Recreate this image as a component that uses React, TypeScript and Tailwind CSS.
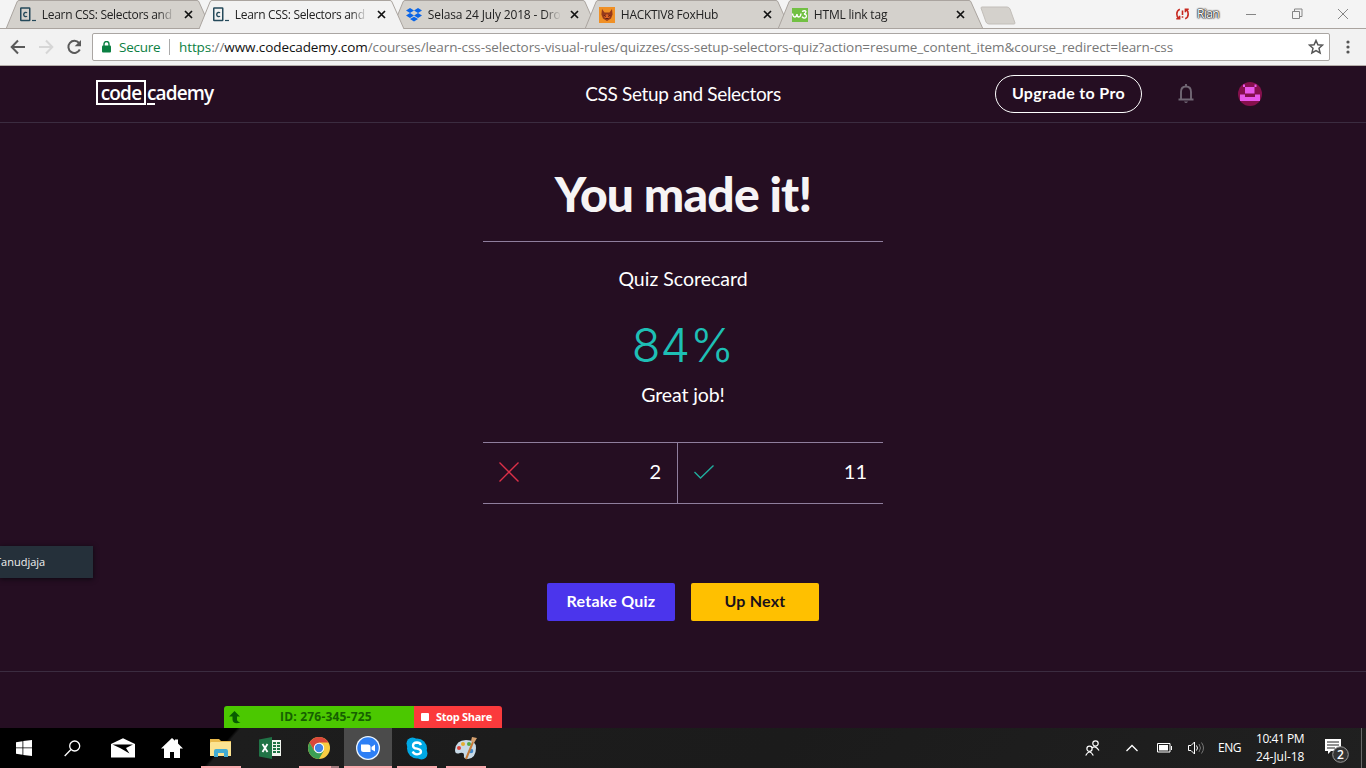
import React from "react";

const ui = "font-['Open_Sans','Noto_Sans',sans-serif]";
const body = "font-['Lato','Noto_Sans',sans-serif]";

function CodeFavicon() {
  return (
    <svg width="16" height="16" viewBox="0 0 16 16" fill="none">
      <rect x=".75" y="1" width="9" height="12.5" rx=".5" stroke="#24495a" strokeWidth="1.5" />
      <path d="M7 5.9C6.3 5.1 3.7 5 3.7 7.5S6.3 9.9 7 9.1" stroke="#24495a" strokeWidth="1.4" />
      <path d="M12 13.5h4" stroke="#24495a" strokeWidth="1.2" />
    </svg>
  );
}

function DropboxFavicon() {
  return (
    <svg width="16" height="16" viewBox="0 0 16 16" fill="#0a65e8">
      <path d="M4 1l4 2.5L4 6 0 3.5zM12 1l4 2.5L12 6 8 3.5zM4 6l4 2.5L4 11 0 8.500zM12 6l4 2.500-4 2.500-4-2.500zM8 9.700l4 2.400-4 2.500-4-2.500z" />
    </svg>
  );
}

function FoxFavicon() {
  return (
    <svg width="16" height="16" viewBox="0 0 16 16">
      <path d="M0 0h16v16H0z" fill="#f09025" />
      <path d="M3 2l2.500 3.500h5L13 2l.6 5.500-1.600 4L8 14 4 11.500 2.400 7.500z" fill="#96391b" />
      <path d="M4.500 7l1.500 1.500 2-1.500 2 1.500L11.500 7l-1 3.500L8 12.500 5.500 10.500z" fill="#df6426" />
      <path d="M4.500 8L7 9.500M11.500 8L9 9.500M6.500 11.500h3" stroke="#5c2114" strokeWidth="1" />
    </svg>
  );
}

function W3Favicon() {
  return (
    <svg width="16" height="14" viewBox="0 0 16 14" fill="none">
      <path d="M0 0h16v14H0z" fill="#72c043" />
      <path d="M.5 5.500q.5 3.500 2.300 3.500T5 6q0 3 1.800 3T9 5.500" stroke="#fff" strokeWidth="1.400" />
      <path d="M10 3.500q3-1.500 4 0-.2 2-2 2.500 2.800.3 2.300 2.800-1.800 2.700-4.300 0" stroke="#fff" strokeWidth="1.300" />
    </svg>
  );
}

type TabProps = { icon: React.ReactNode; title: string; active?: boolean; tracking: string };

function Tab({ icon, title, active, tracking }: TabProps) {
  const fill = active ? "#f2f2f2" : "#d4d1cc";
  return (
    <div className={`relative h-[29px] w-[193px] shrink-0 ${active ? "z-10" : ""}`}>
      <svg className="absolute top-0 left-0" width="214" height="29" viewBox="0 0 214 29">
        <path d="M6 29L17 2Q17.500.5 19 .5H197Q198.500.5 199 2L211 29" fill={fill} stroke="#aaa49f" />
        {!active && <path d="M6 28.500H211" stroke="#aaa49f" />}
      </svg>
      <div className="relative flex h-full items-center pl-5">
        <span className="flex w-[22px] items-center">{icon}</span>
        <span
          className={`w-[134px] text-[12px] leading-4 whitespace-nowrap text-[#222] [mask-image:linear-gradient(to_right,black_87%,transparent)] ${tracking}`}
        >
          {title}
        </span>
        <svg className="ml-[9px] shrink-0" width="9" height="9" viewBox="0 0 9 9">
          <path d="M1 1l7 7M8 1L1 8" stroke="#111" strokeWidth="1.700" />
        </svg>
      </div>
    </div>
  );
}

function TabStrip() {
  return (
    <div className="flex h-[29px] border-b border-[#aaa49f] bg-[#f4f4f4]">
      <Tab icon={<CodeFavicon />} title="Learn CSS: Selectors and" tracking="tracking-[-0.32px]" />
      <Tab icon={<CodeFavicon />} title="Learn CSS: Selectors and" active tracking="tracking-[-0.32px]" />
      <Tab icon={<DropboxFavicon />} title="Selasa 24 July 2018 - Dro" tracking="tracking-[-0.15px]" />
      <Tab icon={<FoxFavicon />} title="HACKTIV8 FoxHub" tracking="tracking-[-0.3px]" />
      <Tab icon={<W3Favicon />} title="HTML link tag" tracking="tracking-[-0.2px]" />
      <svg className="mt-[6px] ml-[15px] shrink-0" width="36" height="19" viewBox="0 0 36 19">
        <path d="M2 1H27Q29 1 30 3L35 17Q35 18 34 18H9Q7 18 6 16L1 2Q1 1 2 1Z" fill="#d4d1cc" stroke="#c2beb9" />
      </svg>
      <div className="ml-auto flex h-[27px] items-center">
        <svg className="mr-2" width="13" height="12" viewBox="0 0 13 12" fill="none" stroke="#c7281f" strokeWidth="1.600">
          <path d="M3.800 1.200Q.8 2.500 .8 6q0 3 2 4.500M.3 10.800h3.300V7.800M9.200 10.800Q12.200 9.500 12.200 6q0-3-2-4.500M12.700 1.200H9.400V4.200M6.500 2.500v4.500M6.500 8.200v1.500" />
        </svg>
        <span className="w-[49px] text-[12px] tracking-[-0.6px] text-white [text-shadow:0_0_1px_#222,0_0_1px_#222,0_0_2px_#222,0_0_2px_#333]">Rian</span>
        <svg width="103" height="12" viewBox="0 0 103 12" fill="none" stroke="#858585" className="mr-[17px]">
          <path d="M0 6.500h10M46.500 3.500h7v7h-7zM48.500 3V1h7.500v7.500h-2.500M92 1l10 10M102 1l-10 10" />
        </svg>
      </div>
    </div>
  );
}

function Toolbar() {
  return (
    <div className="flex h-[37px] items-center border-b border-[#b5aeaa] bg-[#f2f2f2] pl-[10px]">
      <svg width="74" height="18" viewBox="0 0 74 18" fill="none" strokeWidth="2" className="mr-2 shrink-0">
        <path d="M15 9H2M8 2.500L1.700 9 8 15.500" stroke="#5a5a5a" />
        <path d="M29 9H42M36 2.500L42.300 9 36 15.500" stroke="#d6d6d6" />
        <path d="M69 5A6 6 0 1 0 69.800 11.500" stroke="#5a5a5a" />
        <path d="M71 2v6.300h-6.300z" fill="#5a5a5a" />
      </svg>
      <div className="flex h-[28px] w-[1238px] shrink-0 items-center rounded-[2px] border border-[#aaa6a3] bg-white pl-[9px]">
        <svg width="9" height="12" viewBox="0 0 9 12" className="mr-[8px]">
          <path d="M2 5V3a2.500 2.500 0 0 1 5 0v2" fill="none" stroke="#0b8043" strokeWidth="1.400" />
          <rect y="4.500" width="9" height="7" rx="1" fill="#0b8043" />
        </svg>
        <span className="w-[50px] text-[13.500px] tracking-[-0.25px] text-[#0b8043]">Secure</span>
        <span className="mr-[9px] h-4 w-px bg-[#aaa]" />
        <span className="text-[13.500px] tracking-[-0.095px] whitespace-nowrap text-[#777]">
          <span className="text-[#0b8043]">https</span>://<span className="text-[#111]">www.codecademy.com</span>
          /courses/learn-css-selectors-visual-rules/quizzes/css-setup-selectors-quiz?action=resume_content_item&amp;course_redirect=learn-css
        </span>
        <svg width="16" height="16" viewBox="0 0 16 16" className="mr-[5px] ml-auto shrink-0">
          <path d="M8 1.500l1.900 4.300 4.600.4-3.500 3.100 1.100 4.600L8 11.500l-4.100 2.400L5 9.300 1.500 6.200l4.600-.4z" fill="none" stroke="#555" strokeWidth="1.500" />
        </svg>
      </div>
      <svg width="4" height="14" viewBox="0 0 4 14" fill="#555" className="ml-[16px]">
        <circle cx="2" cy="2" r="1.600" /><circle cx="2" cy="7" r="1.600" /><circle cx="2" cy="12" r="1.600" />
      </svg>
    </div>
  );
}

function SiteHeader() {
  return (
    <header className={`grid h-[57px] grid-cols-[1fr_auto_1fr] items-center border-b border-[#3b2c40] pr-[104px] pl-24 text-white ${body}`}>
      <div className="-mt-[3px] flex h-[25px] items-center font-['Open_Sans',sans-serif] text-[19px] leading-none font-semibold">
        <span className="flex h-[25px] w-[50px] items-center justify-center border-2 border-white pt-[1px] tracking-[-0.8px]">code</span>
        <span className="relative flex pt-[1px] pl-[1px] tracking-[-0.85px]">
          cademy
          <span className="absolute -bottom-[2px] left-[1px] h-[2px] w-2 bg-white" />
        </span>
      </div>
      <div className="pl-2 text-[19px] tracking-[-0.34px]">CSS Setup and Selectors</div>
      <div className="-mt-px flex items-center justify-end">
        <button className="h-[38px] w-[147px] rounded-full border border-white pb-[2px] text-[16px] font-bold tracking-[0.35px]">Upgrade to Pro</button>
        <svg className="ml-9" width="17" height="21" viewBox="0 0 17 21" fill="none" stroke="#716774" strokeWidth="1.900">
          <path d="M.500 16.500H15.500M3 16V9Q3 3.500 8 3.500T13 9V16M8 1v2.500" />
          <path d="M6 18.500h4q-2 3-4 0z" fill="#716774" stroke="none" />
        </svg>
        <svg className="ml-[43px]" width="24" height="24" viewBox="0 0 24 24">
          <circle cx="12" cy="12" r="12" fill="#85104d" />
          <path d="M5 2.500h2V5h9.500V2.500h2V5h-2v6.500H7V5H5zM2 12.500h5V15h10v-2.500h5V19H2z" fill="#e757e9" />
        </svg>
      </div>
    </header>
  );
}

function Scorecard() {
  return (
    <main className={`mx-auto flex w-[400px] flex-col items-center text-white ${body}`}>
      <h1 className="flex h-[118px] items-center pt-[24px] text-[48px] leading-none font-black tracking-[-0.8px] whitespace-nowrap text-[#f6f4f5]">You made it!</h1>
      <div className="flex h-[201px] w-full flex-col items-center border-t border-[#8f7e9d]">
        <p className="mt-[25px] text-[19.500px] leading-6">Quiz Scorecard</p>
        <p className="mt-[30px] font-['Inter',sans-serif] text-[47px] leading-[48px] font-[350] text-[#1ebfb5]">84%</p>
        <p className="mt-[14px] text-[19.500px] leading-6 tracking-[-0.1px]">Great job!</p>
      </div>
      <div className="flex h-[62px] w-full border-y border-[#8f7e9d] text-[20px]">
        <div className="flex w-[195px] items-center justify-between border-r border-[#8f7e9d] px-4 pb-[2px]">
          <svg width="20" height="20" viewBox="0 0 20 20"><path d="M.5.5l19 19M19.500.5l-19 19" stroke="#dc3048" strokeWidth="1.400" /></svg>
          <span className="pb-[2px]">2</span>
        </div>
        <div className="flex flex-1 items-center justify-between px-4 pb-[2px]">
          <svg width="20" height="14" viewBox="0 0 20 14"><path d="M.5 7L6.500 13 19.500.5" fill="none" stroke="#20ad9e" strokeWidth="1.400" /></svg>
          <span className="pb-[2px]">11</span>
        </div>
      </div>
      <div className="mt-[79px] flex gap-4 text-[16px] font-bold tracking-[0.25px]">
        <button className="h-[38px] w-32 rounded-[2px] bg-[#4b35ec] pb-[2px]">Retake Quiz</button>
        <button className="h-[38px] w-32 rounded-[2px] bg-[#ffc000] pb-[2px] text-[#19101b]">Up Next</button>
      </div>
    </main>
  );
}

function ShareBar() {
  return (
    <div className="absolute top-[706px] left-[224px] flex h-[22px] w-[278px] overflow-hidden rounded-t-[3px] text-[12px] font-bold">
      <div className="flex w-[190px] items-center bg-[#4bc800] text-[#166000]">
        <svg className="ml-[5px]" width="13" height="13" viewBox="0 0 13 13" fill="#075c00"><path d="M5.500 0L11 5.500H8v3q0 2 3.500 3Q4 14 3.500 8.500v-3H0z" /></svg>
        <span className="ml-[38px] tracking-[0.2px]">ID: 276-345-725</span>
      </div>
      <div className="flex flex-1 items-center bg-[#fb3a3c] text-[11px] text-white">
        <span className="mr-[7px] ml-[7px] size-2 rounded-[1px] bg-white" />
        <span className="tracking-[-0.3px]">Stop Share</span>
      </div>
    </div>
  );
}

function Pinned({ children, w, line, active, split }: { children: React.ReactNode; w: string; line?: string; active?: boolean; split?: boolean }) {
  return (
    <div className={`flex h-10 shrink-0 flex-col items-center ${w} ${active ? "bg-[#4b4b4b]" : ""}`}>
      <div className="flex h-[38px] items-center justify-center pt-[2px]">{children}</div>
      {line && (
        <div className={`flex h-[2px] justify-end bg-[#f9a9ad] ${line}`}>{split && <span className="w-2 bg-[#a57c80]" />}</div>
      )}
    </div>
  );
}

function Taskbar() {
  return (
    <footer className="flex h-10 items-center bg-[linear-gradient(131deg,#000_0,#000_179px,#1d1d1d_182px,#1b1b1b_600px,#202020_100%)] text-white">
      <Pinned w="w-12">
        <svg width="16" height="16" viewBox="0 0 16 16" fill="#fff"><path d="M0 2.200l6.500-1v6.300H0zM7.300 1L16 0v7.500H7.300zM0 8.300h6.500v6.400L0 13.800zM7.300 8.300H16V16l-8.700-1.100z" /></svg>
      </Pinned>
      <Pinned w="w-12">
        <svg width="17" height="17" viewBox="0 0 17 17" fill="none" stroke="#fff" strokeWidth="1.300"><circle cx="10.700" cy="6" r="5" /><path d="M7 9.500L.7 16" /></svg>
      </Pinned>
      <Pinned w="w-[54px]">
        <svg width="24" height="20" viewBox="0 0 24 20"><path d="M0 6L12 .3 24 6V19.500H0z" fill="#fff" /><path d="M1.500 6.500H22L15 10l3.500 5.500L9.500 10.300z" fill="#000" /></svg>
      </Pinned>
      <Pinned w="w-[44px]">
        <svg width="22" height="20" viewBox="0 0 22 20" fill="#fff"><path d="M11 0l3 2.700V1.500h3v4L22 10.500h-3V20h-6v-6H9v6H3v-9.500H0z" /></svg>
      </Pinned>
      <Pinned w="w-[54px]" line="w-10">
        <svg width="22" height="20" viewBox="0 0 22 20"><path d="M0 1h9l2 2h10v15H0z" fill="#e9b94b" /><path d="M1 4h20v14H0V5z" fill="#fce391" /><path d="M4 19v-6q0-2 2-2h10q2 0 2 2v6h-4v-4H8v4z" fill="#43acd3" /></svg>
      </Pinned>
      <Pinned w="w-[43px]">
        <svg width="22" height="22" viewBox="0 0 22 22"><path d="M12 3h10v16H12z" fill="#f1f5ef" /><path d="M14 5h3v2h-3zm4 0h3v2h-3zm-4 3h3v2h-3zm4 0h3v2h-3zm-4 3h3v2h-3zm4 0h3v2h-3zm-4 3h3v2h-3zm4 0h3v2h-3z" fill="#207346" /><path d="M0 2.500L13 0v22L0 19.500z" fill="#207346" /><path d="M3.500 7l5 8M8.500 7l-5 8" stroke="#fff" strokeWidth="1.800" /></svg>
      </Pinned>
      <Pinned w="w-[53px] pl-[3px]" line="w-10" split>
        <svg width="22" height="22" viewBox="0 0 22 22">
          <circle cx="11" cy="11" r="11" fill="#f8cc42" />
          <path d="M1.500 5.500A11 11 0 0 1 20.500 5.500H11L6.200 13.700z" fill="#d9473b" />
          <path d="M1.500 5.500A11 11 0 0 0 11 22l4.800-8.200-9.600 0z" fill="#3c9e54" />
          <circle cx="11" cy="11" r="5.200" fill="#fff" /><circle cx="11" cy="11" r="4.200" fill="#4285e8" />
        </svg>
      </Pinned>
      <Pinned w="w-12" line="w-12" active>
        <svg width="24" height="24" viewBox="0 0 24 24"><circle cx="12" cy="12" r="12" fill="#eef7ff" /><circle cx="12" cy="12" r="10.700" fill="#2d7ff5" /><path d="M5 8.500h7q2.500 0 2.500 2.500v5h-7Q5 16 5 13.500zM15.500 11L19 8.500v7L15.500 13.500z" fill="#fff" /></svg>
      </Pinned>
      <Pinned w="w-[50px]" line="w-10">
        <svg width="22" height="23" viewBox="0 0 22 23"><circle cx="11" cy="11.500" r="10" fill="#00a8e4" /><circle cx="6.500" cy="6.500" r="6" fill="#00a8e4" /><circle cx="15.500" cy="16.500" r="6" fill="#00a8e4" /><path d="M15 8Q14 5.500 11 5.500 7 5.700 7 8.500t4 3.200q4 .8 4 3T11 17.300Q7.700 17.200 6.700 14.500" fill="none" stroke="#fff" strokeWidth="2.300" /></svg>
      </Pinned>
      <Pinned w="w-[48px]" line="w-10">
        <svg width="24" height="24" viewBox="0 0 24 24"><path d="M1 14Q2 4 12 4t10 8q0 10-8 11-5 0-4-4 0-3-4-2-5 2-5-3z" fill="#c8dae7" /><circle cx="5" cy="12" r="2" fill="#da4238" /><circle cx="9" cy="8" r="2" fill="#e4ad30" /><circle cx="15" cy="8" r="2" fill="#54a745" /><circle cx="17" cy="15" r="2.300" fill="#4389ca" /><path d="M12 23L19 6" stroke="#c57a38" strokeWidth="2" /><path d="M17 5l1-4 5 1-3 5z" fill="#d6a16f" /></svg>
      </Pinned>
      <div className="ml-auto flex h-full items-center">
        <svg width="15" height="16" viewBox="0 0 15 16" fill="none" stroke="#fff" strokeWidth="1.200" className="mr-[26px]"><circle cx="10.500" cy="3.500" r="2.700" /><path d="M7 8q3.500-3 7 2.500" /><circle cx="4.500" cy="8.800" r="2.600" /><path d="M.7 15.500q3.800-7 7.600 0" /></svg>
        <svg width="12" height="8" viewBox="0 0 12 8" fill="none" stroke="#fff" strokeWidth="1.300" className="mr-[19px]"><path d="M.5 7L6 1.500 11.500 7" /></svg>
        <svg width="15" height="10" viewBox="0 0 15 10" className="mr-[16px]"><path d="M.5.500h12.500v8.500H.5zM14.500 3v4" fill="none" stroke="#fff" /><path d="M2 2h9v5.500H2z" fill="#fff" /></svg>
        <svg width="16" height="14" viewBox="0 0 16 14" fill="none" stroke="#fff" className="mr-[14px]"><path d="M.5 4.500H3L6.500 1v12L3 9.500H.5z" /><path d="M8.500 4.500q2 2.500 0 5" /><path d="M11 3q3 4 0 8M13.500 1.500q4 5.500 0 11" stroke="#777" /></svg>
        <span className="w-[38px] text-[12px] tracking-[-0.5px]">ENG</span>
        <div className="w-[48px] text-center text-[12px] leading-[18px] tracking-[-0.45px] whitespace-nowrap"><div>10:41 PM</div><div className="tracking-[-0.05px]">24-Jul-18</div></div>
        <svg width="24" height="26" viewBox="0 0 24 26" className="mt-[5px] ml-[21px]"><path d="M0 1h16v12H6l-3 3v-3H0z" fill="#fff" /><path d="M2 4h12M2 7h12M2 10h8" stroke="#222" /><circle cx="15.500" cy="16.500" r="7.800" fill="#343434" stroke="#999" /><text x="15.500" y="21" fill="#fff" fontSize="12" fontWeight="600" textAnchor="middle">2</text></svg>
        <span className="mr-[4px] ml-[12px] h-10 w-px bg-[#696969]" />
      </div>
    </footer>
  );
}

export default function App() {
  return (
    <div className={`relative flex h-[768px] w-[1366px] flex-col overflow-hidden bg-[#250e22] ${ui}`}>
      <TabStrip />
      <Toolbar />
      <SiteHeader />
      <div className="h-[549px] border-b border-[#3b2c40]"><Scorecard /></div>
      <div className="h-14" />
      <Taskbar />
      <div className="absolute top-[546px] left-0 flex h-8 w-[93px] items-center bg-[#25303a] text-[11px] text-[#f0f0f0] shadow-[0_1px_5px_#0d0710]">
        <span className="-ml-[5px] tracking-[0px]">Tanudjaja</span>
      </div>
      <ShareBar />
    </div>
  );
}
